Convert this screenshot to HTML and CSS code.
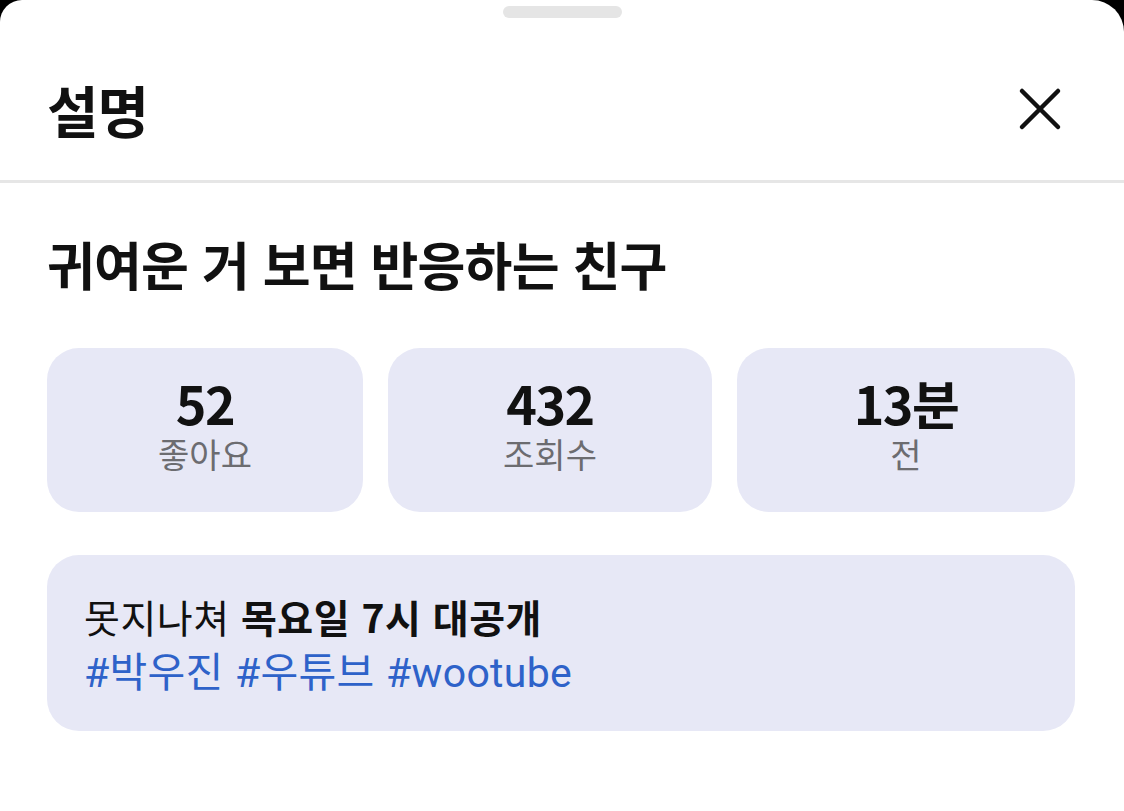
FILE: index.html
```html
<!DOCTYPE html>
<html lang="ko">
<head>
<meta charset="utf-8">
<link rel="stylesheet" href="styles.css">
</head>
<body>
<div class="sheet">
  <div class="handle-row"><div class="handle"></div></div>
  <header class="sheet-header">
    <h1 class="sheet-title">설명</h1>
    <button class="close-btn" aria-label="닫기">
      <svg width="44" height="44" viewBox="0 0 44 44"><path d="M4 4 L40 40 M40 4 L4 40" stroke="#111" stroke-width="4.5" stroke-linecap="round" fill="none"/></svg>
    </button>
  </header>
  <div class="divider"></div>
  <main class="content">
    <h2 class="video-title">귀여운 거 보면 반응하는 친구</h2>
    <div class="stats">
      <div class="stat"><div class="stat-num">52</div><div class="stat-label">좋아요</div></div>
      <div class="stat"><div class="stat-num">432</div><div class="stat-label">조회수</div></div>
      <div class="stat"><div class="stat-num">13분</div><div class="stat-label">전</div></div>
    </div>
    <div class="desc">
      <p class="desc-line">못지나쳐 <strong>목요일 7시 대공개</strong></p>
      <p class="desc-tags"><a>#박우진</a> <a>#우튜브</a> <a>#wootube</a></p>
    </div>
  </main>
</div>
</body>
</html>
```

FILE: styles.css
```css
html, body {
  margin: 0;
  padding: 0;
  background: #000;
  height: 100%;
}
body {
  font-family: "Noto Sans CJK KR", "Noto Sans", sans-serif;
  color: #111;
}
.sheet {
  background: #fff;
  min-height: 100%;
  border-top-left-radius: 22px;
  border-top-right-radius: 32px;
  overflow: hidden;
}
.handle-row {
  display: flex;
  justify-content: center;
  padding-top: 6px;
}
.handle {
  width: 119px;
  height: 12px;
  border-radius: 6px;
  background: #e5e5e5;
  margin-left: 1px;
}
.sheet-header {
  display: flex;
  align-items: center;
  justify-content: space-between;
  box-sizing: border-box;
  height: 162px;
  padding: 20px 62px 0 47px;
}
.sheet-title {
  margin: 0;
  font-size: 56px;
  font-weight: 700;
  letter-spacing: -1px;
  line-height: 1;
}
.close-btn {
  border: 0;
  background: none;
  padding: 0;
  display: flex;
}
.divider {
  height: 3px;
  background: #e6e6e6;
}
.content {
  padding: 0 49px 0 47px;
}
.video-title {
  margin: 45px 0 0;
  font-size: 52px;
  font-weight: 700;
  letter-spacing: -0.8px;
  line-height: 72px;
}
.stats {
  display: grid;
  grid-template-columns: 316fr 324fr 338fr;
  gap: 25px;
  margin-top: 48px;
}
.stat {
  box-sizing: border-box;
  height: 164px;
  padding-bottom: 6px;
  background: #e7e8f6;
  border-radius: 32px;
  display: flex;
  flex-direction: column;
  align-items: center;
  justify-content: center;
}
.stat-num {
  font-size: 52px;
  font-weight: 700;
  line-height: 50px;
  letter-spacing: -1.5px;
}
.stat-label {
  font-size: 34px;
  color: #6c6c70;
  line-height: 44px;
  margin-top: 4px;
}
.desc {
  margin-top: 43px;
  background: #e7e8f6;
  border-radius: 32px;
  padding: 34px 37px 31px;
}
.desc p {
  margin: 0;
  font-size: 39px;
  line-height: 54px;
  letter-spacing: 0.5px;
}
.desc strong {
  font-weight: 600;
}
.desc-tags a {
  color: #2e62c9;
  font-family: "Roboto", "Noto Sans CJK KR", sans-serif;
  font-size: 41px;
  letter-spacing: 0.3px;
}
```
